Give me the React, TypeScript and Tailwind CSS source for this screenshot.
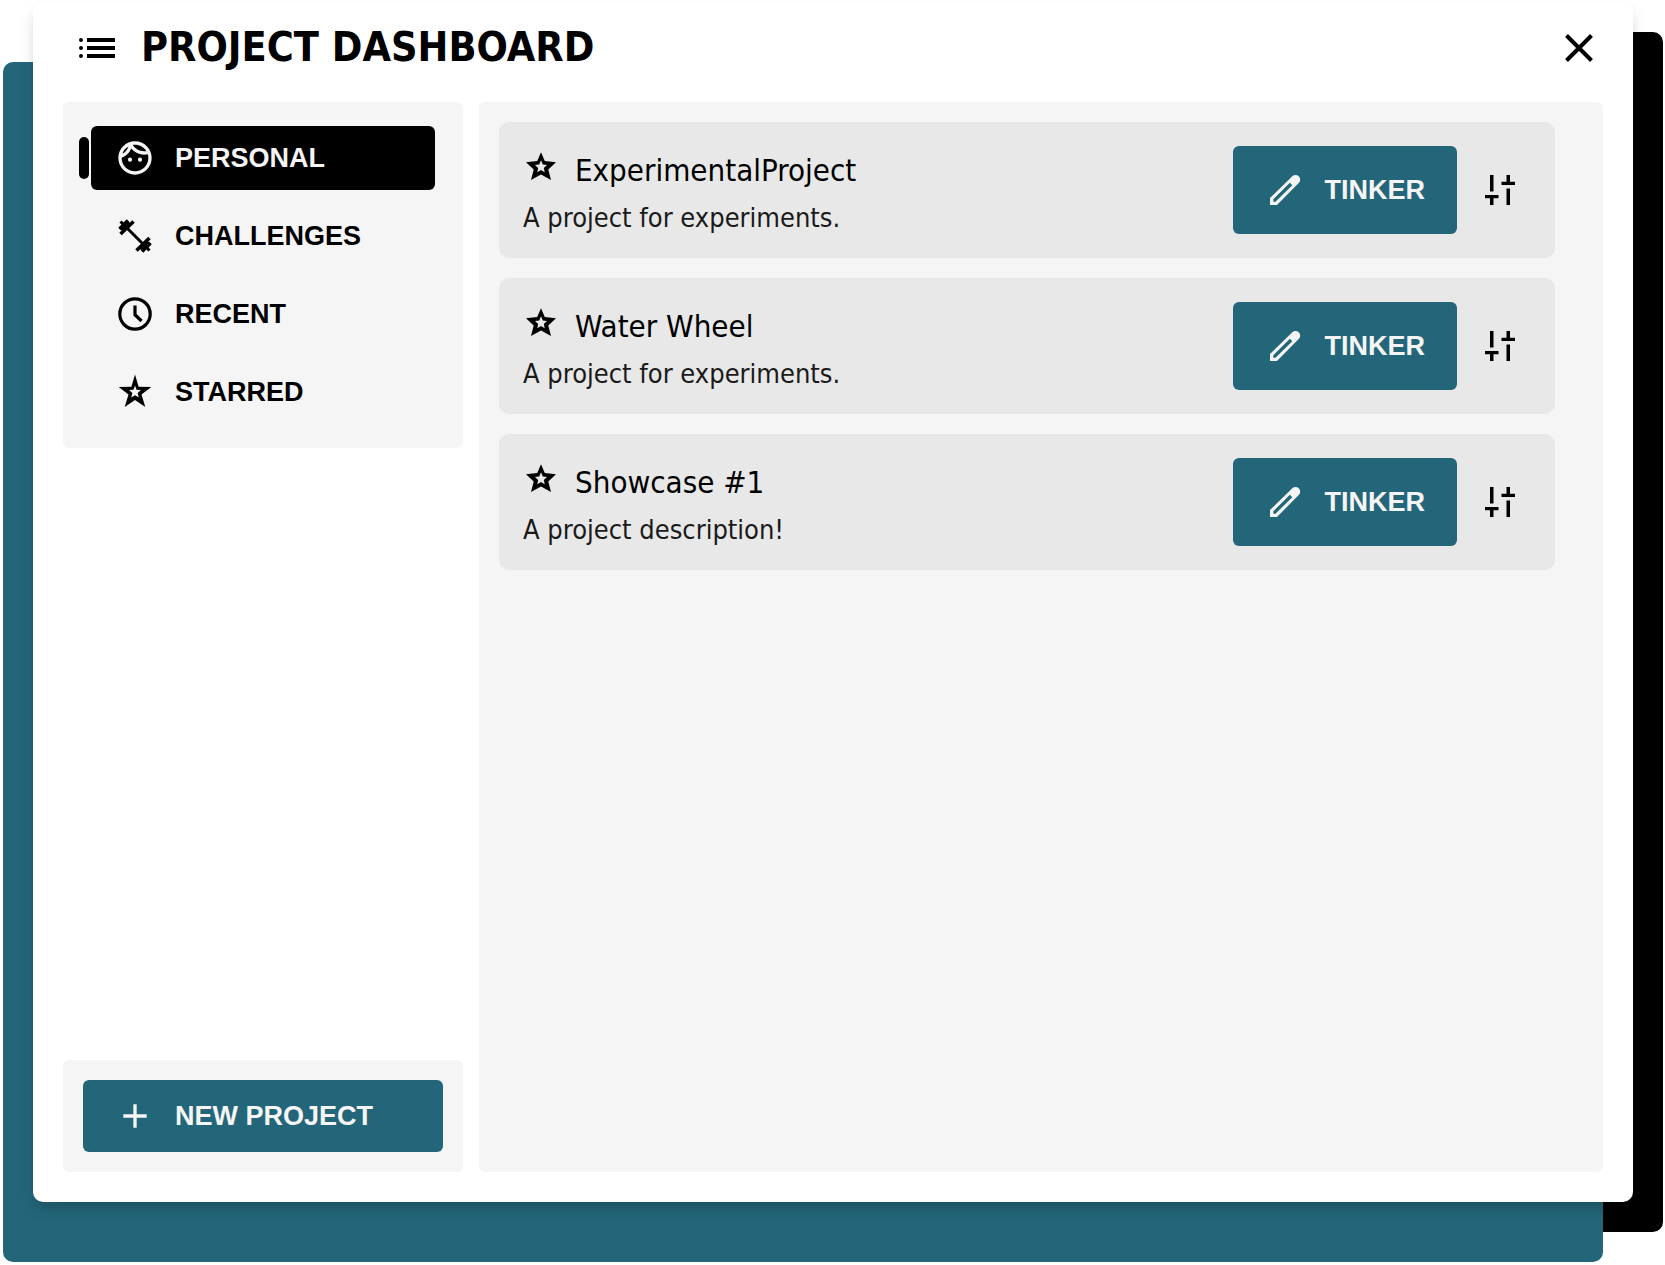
import {
  MdAdd,
  MdOutlineFace,
} from "react-icons/md";

type IconProps = { className?: string };

function ListIcon({ className }: IconProps) {
  return (
    <svg viewBox="0 0 40 40" className={className} fill="currentColor" aria-hidden="true">
      <path d="M10 10h28v4H10zM10 18h28v4H10zM10 26h28v4H10z" />
      <circle cx="4" cy="12" r="2" />
      <circle cx="4" cy="20" r="2" />
      <circle cx="4" cy="28" r="2" />
    </svg>
  );
}

function SharpStarIcon({ className }: IconProps) {
  return (
    <svg viewBox="0 0 40 40" className={className} fill="currentColor" aria-hidden="true">
      <path
        fillRule="evenodd"
        d="M20 2.500 23.600 14.700 36.300 15 26.500 22.600 30.300 35 20 28 9.700 35 13.500 22.600 3.700 15 16.400 14.700ZM20 13.500 18.500 17.700 14 18 17.400 20.900 16.200 25.600 20 23.200 23.800 25.600 22.600 20.900 26 18 21.500 17.700Z"
      />
    </svg>
  );
}

function StarIcon({ className }: IconProps) {
  return (
    <svg viewBox="0 0 36 36" className={className} fill="currentColor" aria-hidden="true">
      <path
        fillRule="evenodd"
        d="M18 4.300 21.800 13 33 14.300 25.300 21.400 28 32 18 26.500 8 32 10.700 21.400 3 14.300 14.200 13ZM18 12.300 16.200 16.400 12 17 15.200 19.900 14.300 24.300 18 22 21.700 24.300 20.800 19.900 24 17 19.800 16.400Z"
      />
    </svg>
  );
}

function ClockIcon({ className }: IconProps) {
  return (
    <svg viewBox="0 0 40 40" className={className} fill="none" stroke="currentColor" strokeWidth="3.2" aria-hidden="true">
      <circle cx="20" cy="20" r="15.200" />
      <path d="M20 11.500V20.700L26.500 27" />
    </svg>
  );
}

function DumbbellIcon({ className }: IconProps) {
  return (
    <svg viewBox="0 0 40 40" className={className} fill="none" stroke="currentColor" aria-hidden="true">
      <path d="M11 11 29 29" strokeWidth="3" />
      <path d="M5.500 18 18.500 5.500M21.500 34.500 34.500 22" strokeWidth="3.600" />
      <path d="M4.500 13 13 4.500M27 35.500 35.500 27" strokeWidth="3.600" />
      <path d="M8 8 12.500 12.500M32 32 27.500 27.500" strokeWidth="11" />
      <path d="M5.500 5.500 10 10M34.500 34.500 30 30" strokeWidth="3" />
    </svg>
  );
}

function PencilIcon({ className }: IconProps) {
  return (
    <svg viewBox="0 0 40 40" className={className} fill="currentColor" aria-hidden="true">
      <path
        fillRule="evenodd"
        d="M5 35V28L27.300 6.300a4.600 4.600 0 0 1 6.400 0 4.600 4.600 0 0 1 0 6.800L12 35ZM8.300 31.700H10.500L27.300 15.200 24.900 12.800 8.300 29.300Z"
      />
    </svg>
  );
}

function TuneIcon({ className }: IconProps) {
  return (
    <svg viewBox="0 0 30 30" className={className} fill="currentColor" aria-hidden="true">
      <path d="M5 0h3.500v16.500H5zM0 20h13.500v3.300H8.500V30H5v-6.700H0zM21.500 0H25v6.700h5V10H16.500V6.700h5zM21.500 13.500H25V30h-3.500z" />
    </svg>
  );
}

function CloseIcon({ className }: IconProps) {
  return (
    <svg viewBox="0 0 28 28" className={className} fill="none" stroke="currentColor" strokeWidth="4" aria-hidden="true">
      <path d="M1.500 1.500 26.500 26.500M26.500 1.500 1.500 26.500" />
    </svg>
  );
}

const sections = [
  { label: "PERSONAL", Icon: MdOutlineFace, active: true },
  { label: "CHALLENGES", Icon: DumbbellIcon, active: false },
  { label: "RECENT", Icon: ClockIcon, active: false },
  { label: "STARRED", Icon: SharpStarIcon, active: false },
];

const projects = [
  { name: "ExperimentalProject", description: "A project for experiments." },
  { name: "Water Wheel", description: "A project for experiments." },
  { name: "Showcase #1", description: "A project description!" },
];

function SideNav() {
  return (
    <nav className="flex flex-col gap-3.5 rounded-md bg-[#f5f5f5] pt-6 pr-7 pb-6 pl-4">
      {sections.map(({ label, Icon, active }) => (
        <div key={label} className="flex items-center gap-0.5">
          <span className={active ? "h-[42px] w-2.5 rounded-full bg-black" : "w-2.5"} />
          <button
            type="button"
            aria-current={active ? "page" : undefined}
            className={
              active
                ? "flex h-16 flex-1 items-center gap-5 rounded-md bg-black pl-6 text-[#f5f5f5]"
                : "flex h-16 flex-1 items-center gap-5 rounded-md pl-6 text-black"
            }
          >
            <Icon className="size-10" />
            <span>{label}</span>
          </button>
        </div>
      ))}
    </nav>
  );
}

function ProjectCard({ name, description }: { name: string; description: string }) {
  return (
    <li className="flex h-[136px] items-center rounded-[10px] bg-[#e8e8e8] pr-8 pl-6">
      <div className="flex-1 pt-2 font-['DejaVu_Sans_Condensed','Noto_Sans',sans-serif]">
        <div className="flex items-center gap-4">
          <button type="button" aria-label={"Star " + name} className="pb-2">
            <StarIcon className="size-9" />
          </button>
          <h2 className="text-[31px] leading-12">{name}</h2>
        </div>
        <p className="text-[27px] leading-12 text-[#1a1a1a]">{description}</p>
      </div>
      <button
        type="button"
        className="flex h-[88px] items-center gap-5 rounded-md bg-[#236679] px-8 text-[27px] font-bold text-[#f5f5f5]"
      >
        <PencilIcon className="size-10" />
        TINKER
      </button>
      <button type="button" aria-label={"Settings for " + name} className="ml-5 p-2">
        <TuneIcon className="size-[30px]" />
      </button>
    </li>
  );
}

export default function App() {
  return (
    <div className="relative min-h-screen bg-white font-['Liberation_Sans',Arial,sans-serif] text-black">
      <div className="absolute top-8 right-0.5 bottom-[33px] left-16 rounded-[10px] bg-black" />
      <div className="absolute top-[62px] right-[62px] bottom-[3px] left-[3px] rounded-[10px] bg-[#236679]" />
      <div className="relative flex min-h-screen pt-0.5 pr-8 pb-[63px] pl-[33px]">
        <main className="flex flex-1 flex-col rounded-[10px] bg-white px-[30px] pb-[30px] shadow-[0_8px_16px_-4px_rgba(0,0,0,0.25)]">
          <header className="flex h-[100px] items-center pb-2 pr-2.5 pl-3.5">
            <ListIcon className="size-10" />
            <h1 className="ml-6 flex-1 pb-0.5 font-['DejaVu_Sans_Condensed','Noto_Sans',sans-serif] text-[41px] leading-none font-bold">
              PROJECT DASHBOARD
            </h1>
            <button type="button" aria-label="Close">
              <CloseIcon className="size-7" />
            </button>
          </header>
          <div className="flex flex-1 gap-4">
            <aside className="flex w-[400px] flex-col justify-between text-[27px] font-bold">
              <SideNav />
              <div className="rounded-md bg-[#f5f5f5] p-5">
                <button
                  type="button"
                  className="flex h-[72px] w-full items-center gap-5 rounded-md bg-[#236679] pl-8 text-[#f5f5f5]"
                >
                  <MdAdd className="size-10" />
                  <span>NEW PROJECT</span>
                </button>
              </div>
            </aside>
            <ul className="flex flex-1 flex-col gap-5 rounded-md bg-[#f5f5f5] pt-5 pr-12 pb-5 pl-5">
              {projects.map((project) => (
                <ProjectCard key={project.name} {...project} />
              ))}
            </ul>
          </div>
        </main>
      </div>
    </div>
  );
}
